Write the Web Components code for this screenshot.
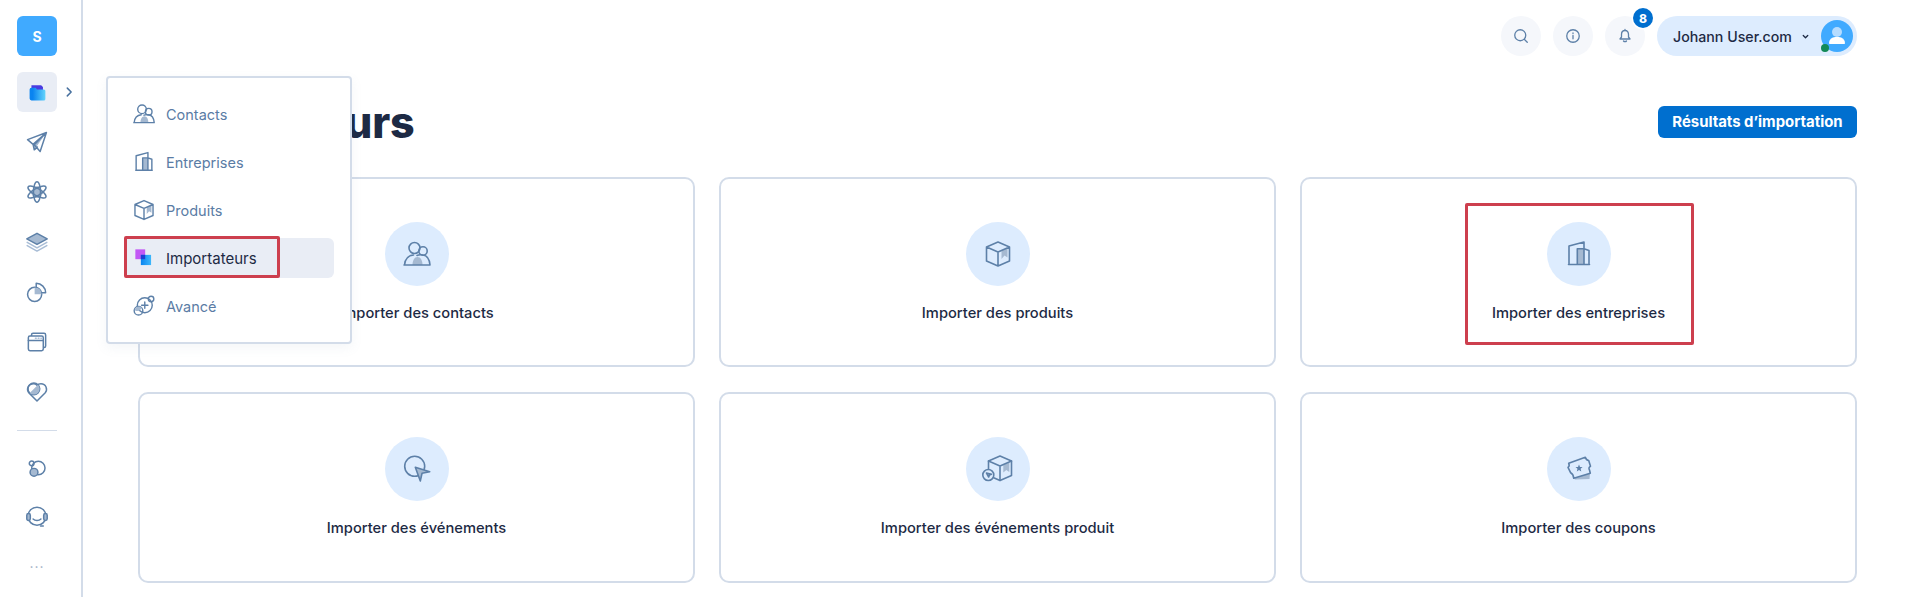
<!DOCTYPE html>
<html lang="fr">
<head>
<meta charset="utf-8">
<title>Importateurs</title>
<style>
html, body { margin: 0; height: 100%; overflow: hidden; background: #fff; font-family: Inter, "Noto Sans", sans-serif; }
</style>
</head>
<body>
<app-shell>
	<side-bar slot="side"></side-bar>
	<fly-menu slot="side">
		<fly-item icon="contacts">Contacts</fly-item>
		<fly-item icon="building">Entreprises</fly-item>
		<fly-item icon="box">Produits</fly-item>
		<fly-item icon="importers" active marked>Importateurs</fly-item>
		<fly-item icon="advanced">Avancé</fly-item>
	</fly-menu>
	<top-bar></top-bar>
	<page-head>Importateurs</page-head>
	<import-grid>
		<import-card icon="contacts">Importer des contacts</import-card>
		<import-card icon="box">Importer des produits</import-card>
		<import-card icon="building" marked>Importer des entreprises</import-card>
		<import-card icon="event">Importer des événements</import-card>
		<import-card icon="boxevent">Importer des événements produit</import-card>
		<import-card icon="coupon">Importer des coupons</import-card>
	</import-grid>
</app-shell>
<script>
// all icons sit on a 28 box; .f = duotone fill, .fs = fill + stroke, .l = light stroke
const ICONS = {
	contacts: `<circle cx="11.5" cy="8" r="5.5"/><circle cx="20" cy="11" r="4.2"/><path class="f" d="M9.5 25c0-4.5 2-8 5-8s5 3.5 5 8z"/><path d="M1 25h26M1.5 25c.5-6 4-9.5 9-10M14 15.5c1-.5 3-1 6-.5 4 .5 6.5 4.5 7 10"/>`,
	building: `<path class="f" d="M12.3 8.7H19V24.5h-6.7z"/><path d="M4 24.5V6L19 2v22.5M12.3 24.5V8.7H19L24 10.5v14M3.5 24.5h21"/>`,
	box: `<path class="f" d="M17.5 10.5l6-2.5v9.5l-3-2-3 3.5z"/><path d="M14 2l11.5 5v14L14 26 2.5 21V7zM2.5 7L14 12l11.5-5M14 12v14"/>`,
	event: `<circle cx="11.7" cy="11.3" r="10"/><path class="fs" d="M12.3 12.3L26.700 16.7 19 18.3 17.3 26z"/>`,
	boxevent: `<path class="w" d="M16 1l11.5 5v14.5L16 25.5 4.5 20.5V6z" style="fill:none"/><path class="f" d="M19.3 10l6-2.5V17l-3-2-3 2.500z"/><path d="M4.5 6L16 11l11.5-5M16 11v14.5"/><circle class="w" cx="4.3" cy="20" r="5.5" style="fill:#ddecfe"/><path class="fs" d="M2.5 18l5 1.3-2 .7-.8 2z"/>`,
	coupon: `<path class="f" d="M9 23.5L25 18l-.5 6L10 24.5z"/><path d="M3.7 8.3L20.3 2.3c.5 1.8 1.7 3 3.4 3.2l1.8 5.7c-1.5.8-2 2.3-1 3.8l.8 3.2-16.600 5c-.2-2.5-1.300-4.500-3-5.400L3 12.3c1.2-.8 1.5-2.3.7-4z"/><path class="s" d="M14 9.5l1 2.5 2.6.1-2 1.7.7 2.6-2.3-1.5-2.2 1.500.7-2.600-2-1.700 2.500-.1z"/>`,
	plane: `<path class="f" d="M26 2L9 17l1.5 7z"/><path d="M26 2L2 11l7 6L26 2 18 26l-7.5-8.500L26 2M9 17l1.5 7 4-3.500"/>`,
	atom: `<path class="f" d="M14 6.5l5 3 2.500 6-3.500 6H10l-3.500-6L9 9.500z"/><g><ellipse cx="14" cy="14" rx="4.500" ry="13"/><ellipse cx="14" cy="14" rx="4.500" ry="13" transform="rotate(60 14 14)"/><ellipse cx="14" cy="14" rx="4.500" ry="13" transform="rotate(120 14 14)"/></g>`,
	layers: `<path class="fs" d="M14 3L27 10 14 17 1 10z"/><path class="l" d="M1.5 14.500l12.500 7 12.500-7M1.500 18.500l12.500 7 12.500-7"/>`,
	pie: `<circle cx="11" cy="17" r="9"/><path class="f" d="M11 17V8a9 9 0 0 1 9 9z"/><path d="M13 8V3a12 12 0 0 1 12 12h-5"/>`,
	windows: `<rect x="7" y="3" width="18" height="18" rx="2"/><rect class="w" x="3" y="6.500" width="19" height="18.500" rx="2"/><path d="M3 12h19"/><path class="l" d="M12 9.300h1M15.500 9.300h1M19 9.300h.5"/>`,
	heart: `<path d="M14 25.500L3.500 15C0 10.500 3 3.500 9.500 3.500c2 0 3.500.8 4.500 2 1-1.200 3-2 5-2 6.500 0 9 7 5.500 11.500z"/><circle cx="10" cy="10" r="7.500"/><path class="f" d="M4.700 15.300A7.500 7.500 0 0 0 15.300 4.700z"/>`,
	circles: `<circle cx="7.200" cy="6.900" r="3"/><circle cx="15.700" cy="12.700" r="8.500"/><circle class="fs" cx="10.200" cy="18.200" r="5"/>`,
	headset: `<circle cx="14" cy="13" r="11.500"/><rect class="fs" x="1" y="9.500" width="4.500" height="9" rx="2.200"/><rect class="fs" x="22.500" y="9.500" width="4.500" height="9" rx="2.200"/><path d="M9 16.500c2.500 2.500 7.500 2.500 10 0M18.500 25.500h3.500"/>`,
	importers: `<rect x="3" y="3" width="12.500" height="12.500" fill="#c257f5" stroke="none"/><rect x="10" y="10" width="13" height="13" fill="url(#imp)" stroke="none"/><rect x="10" y="10" width="5.500" height="5.500" fill="#1b3ed4" stroke="none"/><defs><linearGradient id="imp" x1="0" x2="1"><stop offset="0" stop-color="#0a84f0"/><stop offset="1" stop-color="#3db7fb"/></linearGradient></defs>`,
	advanced: `<circle cx="15" cy="13" r="9.500"/><circle cx="7" cy="20" r="5.500"/><circle cx="23" cy="5" r="3.500"/><path class="f" d="M2 19a5.500 5.500 0 0 1 9-3 5.500 5.500 0 0 1-9 3z"/><path d="M15 9v8M11 13h8"/>`,
	folder: `<path d="M4 2h16l3 3v7H4z" fill="#4a3be0" stroke="none"/><path d="M1 9a3 3 0 0 1 3-3h7l2 3h11.500A2.500 2.500 0 0 1 27 11.500v13a2.500 2.500 0 0 1-2.500 2.500H4a3 3 0 0 1-3-3z" fill="url(#fld)" stroke="none"/><defs><linearGradient id="fld" x1="0" x2="1"><stop offset=".2" stop-color="#0a84f0"/><stop offset="1" stop-color="#63d4fb"/></linearGradient></defs>`,
	search: `<circle cx="12.500" cy="12.500" r="11"/><path d="M21 21l5.500 5.500"/>`,
	info: `<circle cx="14" cy="14" r="12.500"/><path d="M14 13v6.500M14 8v1.200"/>`,
	bell: `<path d="M14 3c-5 0-7 3.500-7 8v5l-3 4h20l-3-4v-5c0-4.500-2-8-7-8zM11 24c1.500 1.800 4.500 1.800 6 0M14 1v2"/>`,
	chevron: `<path d="M10 5l9 9-9 9"/>`,
	caret: `<path d="M7 11l7 7 7-7"/>`
};

class UiIcon extends HTMLElement {
	constructor() {
		super();
		this.attachShadow({ mode: "open" });
		const name = this.getAttribute("name");
		this.shadowRoot.innerHTML = /* html */`
		<style>
		:host { display: inline-flex; width: var(--size, 28px); height: var(--size, 28px); flex: none; }
		svg { width: 100%; height: 100%; display: block; overflow: visible; }
		.root { fill: none; stroke: var(--stroke, #5d80a8); stroke-width: var(--sw, 1.6); stroke-linejoin: round; stroke-linecap: round; }
		.f { fill: #a5b9d1; stroke: none; }
		.fs { fill: #a5b9d1; }
		.l { stroke: #a9bdd6; }
		.s { fill: #5d80a8; stroke: none; }
		.w { fill: #fff; }
		</style>
		<svg class="root" viewBox="0 0 28 28" aria-hidden="true">${ICONS[name] || ""}</svg>`;
	}

	static get is() {
		return "ui-icon";
	}
}
customElements.define(UiIcon.is, UiIcon);

class AppShell extends HTMLElement {
	constructor() {
		super();
		this.attachShadow({ mode: "open" });
		this.shadowRoot.innerHTML = /* html */`
		<style>
		:host { display: flex; height: 597px; color: #1d2a44; position: relative; }
		main { flex: 1; min-width: 0; padding: 16px 48px 0 55px; display: flex; flex-direction: column; }
		</style>
		<slot name="side"></slot>
		<main><slot></slot></main>`;
	}
}
customElements.define("app-shell", AppShell);

class SideBar extends HTMLElement {
	constructor() {
		super();
		this.attachShadow({ mode: "open" });
		const rail = ["plane", "atom", "layers", "pie", "windows", "heart"];
		this.shadowRoot.innerHTML = /* html */`
		<style>
		:host { display: flex; flex-direction: column; align-items: center; box-sizing: border-box; width: 83px; flex: none; padding: 16px 7px 0 0; border-right: 2px solid #d3dce9; --size: 22px; --sw: 1.9; }
		.logo { width: 40px; height: 40px; border-radius: 6px; background: #40aaff; color: #fff; font: 700 14px Inter, sans-serif; display: grid; place-items: center; margin-bottom: 16px; }
		.slot { width: 40px; height: 40px; display: grid; place-items: center; margin-bottom: 10px; position: relative; border-radius: 6px; }
		.active { background: #e9edf5; }
		.more { position: absolute; left: 46px; top: 14px; --size: 12px; --sw: 3.5; --stroke: #47709e; }
		hr { width: 40px; height: 1px; margin: 8px 0 18px; border: 0; background: #d3dce9; }
		.near { margin-bottom: 8px; }
		.tight { margin-bottom: 6px; }
		.dots { color: #9fb0c6; font-size: 14px; letter-spacing: 1px; line-height: 40px; }
		</style>
		<div class="logo">S</div>
		<div class="slot active"><ui-icon name="folder" style="--size:17px"></ui-icon><ui-icon class="more" name="chevron"></ui-icon></div>
		${rail.map(r => `<div class="slot"><ui-icon name="${r}"></ui-icon></div>`).join("")}
		<hr>
		<div class="slot near"><ui-icon name="circles"></ui-icon></div>
		<div class="slot tight"><ui-icon name="headset"></ui-icon></div>
		<div class="slot dots">...</div>`;
	}
}
customElements.define("side-bar", SideBar);

class FlyMenu extends HTMLElement {
	constructor() {
		super();
		this.attachShadow({ mode: "open" });
		this.shadowRoot.innerHTML = /* html */`
		<style>
		:host { position: absolute; left: 106px; top: 76px; z-index: 5; box-sizing: border-box; width: 246px; background: #fff; border: 2px solid #d3dce9; border-radius: 4px; padding: 16px; display: flex; flex-direction: column; gap: 8px; box-shadow: 0 4px 12px rgba(120,140,170,.08); }
		</style>
		<slot></slot>`;
	}
}
customElements.define("fly-menu", FlyMenu);

class FlyItem extends HTMLElement {
	constructor() {
		super();
		this.attachShadow({ mode: "open" });
		this.shadowRoot.innerHTML = /* html */`
		<style>
		:host { display: flex; align-items: center; gap: 11px; height: 40px; padding-left: 9px; border-radius: 6px; position: relative; color: #5a7ca5; font: 400 14.5px Inter, sans-serif; --size: 22px; --sw: 1.8; }
		:host([active]) { background: #e9edf5; color: #1d2a44; font-size: 15px; }
		:host([marked])::after { content: ""; position: absolute; left: 0; top: -2px; width: 156px; height: 42px; box-sizing: border-box; border: 3px solid #cd3f4e; border-radius: 2px; }
		</style>
		<ui-icon name="${this.getAttribute("icon")}"></ui-icon><slot></slot>`;
	}
}
customElements.define("fly-item", FlyItem);

class TopBar extends HTMLElement {
	constructor() {
		super();
		this.attachShadow({ mode: "open" });
		this.shadowRoot.innerHTML = /* html */`
		<style>
		:host { display: flex; justify-content: flex-end; gap: 12px; height: 40px; margin-bottom: 50px; }
		.round { width: 40px; height: 40px; border-radius: 50%; background: #f5f7fb; display: grid; place-items: center; position: relative; --size: 14px; --sw: 2.6; }
		.badge { position: absolute; left: 28px; top: -8px; width: 20px; height: 20px; border-radius: 50%; background: #006fcf; color: #fff; box-shadow: 0 0 0 1.5px #fff; font: 800 12px Inter, sans-serif; display: grid; place-items: center; }
		.user { width: 200px; box-sizing: border-box; height: 40px; border-radius: 20px; background: #ddecfe; display: flex; align-items: center; padding: 0 4px 0 16px; font: 500 14.2px Inter, sans-serif; color: #1d2a44; position: relative; }
		.user span { flex: 1; white-space: nowrap; }
		.caret { --size: 9px; --sw: 4; --stroke: #1d2a44; margin-right: 11px; }
		.avatar { width: 32px; height: 32px; border-radius: 50%; background: #40aaff; position: relative; overflow: hidden; flex: none; }
		.avatar i { position: absolute; display: block; background: #b5dcff; width: 10px; height: 10px; border-radius: 50%; left: 11px; top: 7px; }
		.avatar b { position: absolute; display: block; background: #fff; width: 16px; height: 7px; border-radius: 8px 8px 1px 1px; left: 8px; top: 17px; }
		.online { position: absolute; right: 28px; bottom: 4px; width: 8px; height: 8px; border-radius: 50%; background: #128a57; }
		</style>
		<div class="round"><ui-icon name="search"></ui-icon></div>
		<div class="round"><ui-icon name="info"></ui-icon></div>
		<div class="round"><ui-icon name="bell"></ui-icon><div class="badge">8</div></div>
		<div class="user"><span>Johann User.com</span><ui-icon class="caret" name="caret"></ui-icon><div class="avatar"><i></i><b></b></div><div class="online"></div></div>`;
	}
}
customElements.define("top-bar", TopBar);

class PageHead extends HTMLElement {
	constructor() {
		super();
		this.attachShadow({ mode: "open" });
		this.shadowRoot.innerHTML = /* html */`
		<style>
		:host { display: flex; justify-content: space-between; align-items: center; height: 32px; margin-bottom: 39px; }
		h1 { margin: 0; font: 800 43px/32px Inter, sans-serif; letter-spacing: -.2px; color: #1d2a44; }
		button { width: 199px; height: 32px; border: 0; border-radius: 6px; background: #006fcf; color: #fff; font: 700 14.9px Inter, sans-serif; padding: 0; }
		</style>
		<h1><slot></slot></h1>
		<button>Résultats d’importation</button>`;
	}
}
customElements.define("page-head", PageHead);

class ImportGrid extends HTMLElement {
	constructor() {
		super();
		this.attachShadow({ mode: "open" });
		this.shadowRoot.innerHTML = /* html */`
		<style>
		:host { display: grid; grid-template-columns: repeat(3, 1fr); grid-auto-rows: 190px 191px; gap: 25px 24px; }
		</style>
		<slot></slot>`;
	}
}
customElements.define("import-grid", ImportGrid);

class ImportCard extends HTMLElement {
	constructor() {
		super();
		this.attachShadow({ mode: "open" });
		this.shadowRoot.innerHTML = /* html */`
		<style>
		:host { display: flex; flex-direction: column; align-items: center; box-sizing: border-box; border: 2px solid #d3dce9; border-radius: 10px; padding-top: 43px; position: relative; font: 500 14.7px Inter, sans-serif; color: #1d2a44; }
		.disc { width: 64px; height: 64px; border-radius: 50%; background: #ddecfe; display: grid; place-items: center; margin-bottom: 18px; }
		:host([marked])::after { content: ""; position: absolute; left: 50%; top: 24px; margin-left: -114px; width: 229px; height: 142px; box-sizing: border-box; border: 3px solid #cd3f4e; border-radius: 2px; }
		</style>
		<div class="disc"><ui-icon name="${this.getAttribute("icon")}"></ui-icon></div>
		<slot></slot>`;
	}
}
customElements.define("import-card", ImportCard);
</script>
</body>
</html>
